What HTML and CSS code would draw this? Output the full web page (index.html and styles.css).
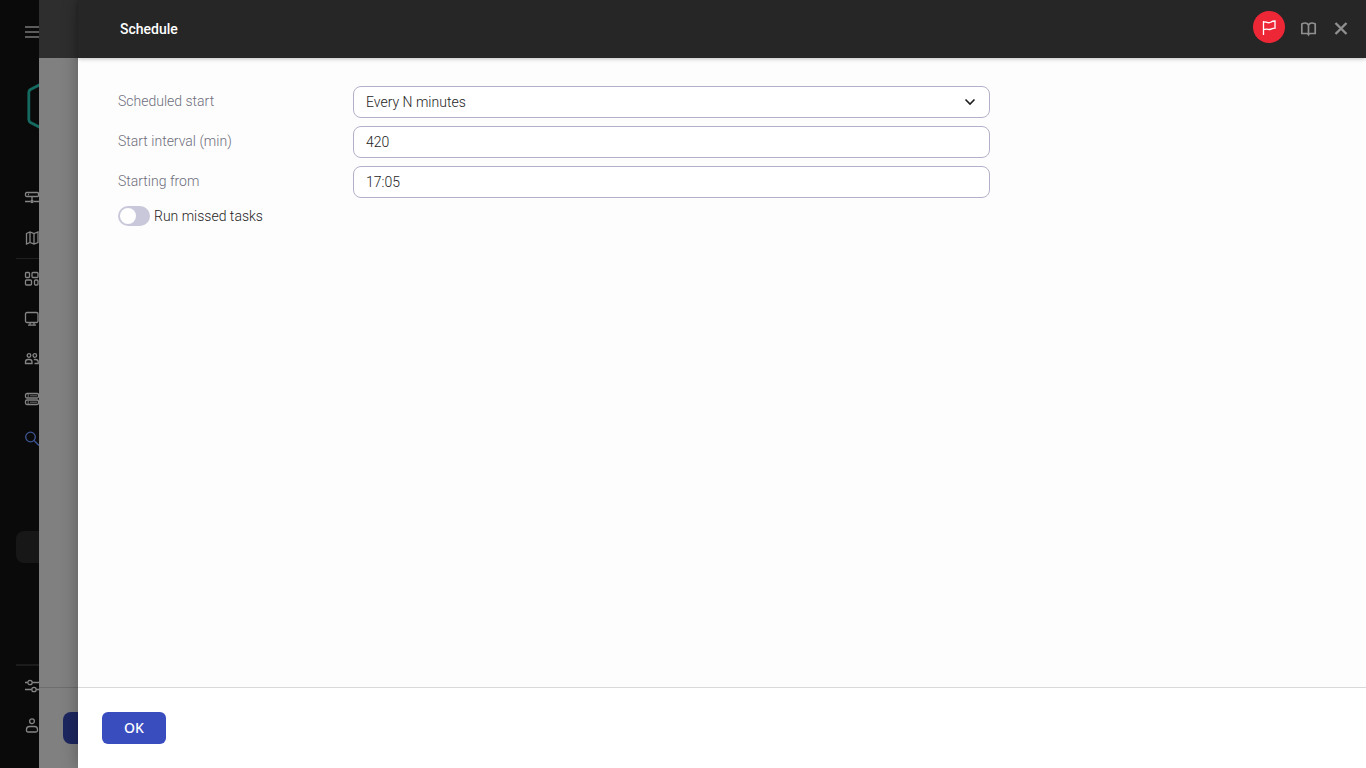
FILE: index.html
```html
<!DOCTYPE html>
<html lang="en">
<head>
<meta charset="utf-8">
<title>Schedule</title>
<meta name="viewport" content="width=device-width, initial-scale=1">
<link rel="stylesheet" href="styles.css">
</head>
<body>
<div class="app">
  <nav class="rail" aria-label="Main menu">
    <button class="rail-menu" type="button" aria-label="Toggle menu">
      <svg class="icon" viewBox="0 0 16 16"><path d="M1 3h15M1 8h15M1 13h15" stroke-width="2"/></svg>
    </button>
    <svg class="logo" viewBox="0 0 40 46" aria-hidden="true"><path d="M20 -1.500L4.500 6.500Q2.800 7.600 2.800 9.500v27Q2.800 38.400 4.500 39.500L20 47.500l15.500-8Q37.200 38.400 37.200 36.500v-27Q37.200 7.600 35.500 6.500Z"/></svg>
    <div class="rail-group">
      <a class="rail-item" href="#" aria-label="Network"><svg class="icon" viewBox="0 0 16 16"><rect x="1.500" y="2.500" width="13" height="4" rx="1.200"/><path d="M4 4.500h1M8 6.500v5M1 11.500h5.500M9.500 11.500H15"/><circle cx="8" cy="11.500" r="1"/></svg></a>
      <a class="rail-item" href="#" aria-label="Map"><svg class="icon" viewBox="0 0 16 16"><path d="M2.500 3.500L6 2l4 1.500L14 2v10.500L10 14l-4-1.500L2.500 14ZM6 2v10.500M10 3.500V14"/></svg></a>
    </div>
    <div class="rail-group rail-ruled">
      <a class="rail-item" href="#" aria-label="Dashboard"><svg class="icon" viewBox="0 0 16 16"><rect x="1.500" y="1.500" width="4" height="5" rx="1"/><rect x="8" y="1.500" width="6" height="5" rx="1"/><rect x="1.500" y="9" width="6" height="5" rx="1"/><rect x="10.500" y="9" width="3.500" height="5" rx="1"/></svg></a>
      <a class="rail-item" href="#" aria-label="Devices"><svg class="icon" viewBox="0 0 16 16"><rect x="1.500" y="1.500" width="12.500" height="10" rx="1.500"/><path d="M6 11.500v2.500M10 11.500v2.500M4 14.200h8"/></svg></a>
      <a class="rail-item" href="#" aria-label="Users"><svg class="icon" viewBox="0 0 16 16"><circle cx="5" cy="4.500" r="1.800"/><circle cx="10.800" cy="4.500" r="1.800"/><path d="M1.500 12.500v-1.500Q1.500 8.500 4 8.500h1.500Q8 8.500 8 11v1.500ZM9.800 8.500h1.700Q14.200 8.500 14.200 11v1.500h-3.700"/></svg></a>
      <a class="rail-item" href="#" aria-label="Servers"><svg class="icon" viewBox="0 0 16 16"><rect x="1.500" y="2.500" width="13" height="4.500" rx="1.500"/><rect x="1.500" y="9" width="13" height="4.500" rx="1.500"/><path d="M4.200 3v3.500M4.200 9.500v3.500M6 4.800h7M6 11.200h7" stroke-width=".8"/></svg></a>
      <a class="rail-item rail-current" href="#" aria-label="Search"><svg class="icon" viewBox="0 0 16 16"><circle cx="6.500" cy="6" r="4.800"/><path d="M10 9.500l5 5"/></svg></a>
    </div>
    <a class="rail-chip" href="#" aria-label="Current section"></a>
    <div class="rail-group rail-bottom">
      <a class="rail-item" href="#" aria-label="Settings"><svg class="icon" viewBox="0 0 16 16"><path d="M1 4.500h2.500M8.500 4.500H16M1 11.500h6.500M12.500 11.500H16"/><circle cx="6" cy="4.500" r="2.200"/><circle cx="10" cy="11.500" r="2.200"/></svg></a>
      <a class="rail-item" href="#" aria-label="Account"><svg class="icon" viewBox="0 0 16 16"><circle cx="8" cy="3.200" r="2.400"/><path d="M2.500 12.500v-1Q2.500 8.500 5.500 8.500h5Q13.500 8.500 13.500 11.500v1Q13.500 14 12 14H4Q2.500 14 2.500 12.500Z"/></svg></a>
    </div>
  </nav>
  <div class="backdrop" aria-hidden="true">
    <div class="backdrop-head"></div>
    <div class="backdrop-body"></div>
    <div class="backdrop-foot"><div class="backdrop-button"></div></div>
  </div>
  <main class="panel">
    <header class="panel-head">
      <h1 class="title">Schedule</h1>
      <button class="flag" type="button" aria-label="Flag"><svg class="icon" viewBox="0 0 16 16"><path d="M2.500 2v14M2.500 3.500C5 1.500 6.500 4.800 9 3.500S12.500 2 14 2v7.200C11.500 9 10.500 10.300 9 10.500S5 9 2.500 10.800"/></svg></button>
      <button class="tool" type="button" aria-label="Help"><svg class="icon" viewBox="0 0 16 16"><path d="M7.500 4Q6.300 2 4.200 2Q2.500 2 .8 3v9.500H5.500Q7 12.500 7.500 13.500Q8 12.500 9.500 12.500H14.200V3Q12.500 2 10.800 2Q8.700 2 7.500 4V13" stroke-width="1.700"/></svg></button>
      <button class="tool" type="button" aria-label="Close"><svg class="icon" viewBox="0 0 16 16"><path d="M2.500 2l11 11M13.500 2l-11 11" stroke-width="2.400"/></svg></button>
    </header>
    <form class="form">
      <div class="fields">
        <label class="label" for="mode">Scheduled start</label>
        <div class="select-wrap">
          <select class="field" id="mode"><option>Every N minutes</option></select>
          <svg class="icon chevron" viewBox="0 0 16 16" aria-hidden="true"><path d="M3.500 5.500L8 10l4.500-4.500"/></svg>
        </div>
        <label class="label" for="interval">Start interval (min)</label>
        <input class="field" id="interval" type="text" value="420">
        <label class="label" for="from">Starting from</label>
        <input class="field" id="from" type="text" value="17:05">
      </div>
      <div class="toggle-row">
        <input class="toggle" id="missed" type="checkbox" role="switch">
        <label for="missed">Run missed tasks</label>
      </div>
    </form>
    <footer class="panel-foot"><button class="ok" type="button">OK</button></footer>
  </main>
</div>
</body>
</html>
```
FILE: styles.css
```css
* { box-sizing: border-box; }

body {
  margin: 0;
  font: 300 14px/20px Roboto, "Liberation Sans", sans-serif;
  color: #1d1d1d;
}

button { border: 0; padding: 0; background: none; cursor: pointer; }

.app { display: flex; min-height: 100vh; overflow: hidden; }

.icon {
  display: block;
  width: 16px;
  height: 16px;
  flex: none;
  fill: none;
  stroke: currentColor;
  stroke-width: 1.3;
}

/* Collapsed navigation */
.rail {
  display: flex;
  flex-direction: column;
  width: 39px;
  flex: none;
  overflow: hidden;
  padding: 24px 0 22px 16px;
  background: #0a0a0a;
  color: #858585;
}

.rail-menu { color: #5c5c5c; padding-left: 8px; align-self: flex-start; }

.logo {
  width: 40px;
  height: 46px;
  flex: none;
  margin: 43px 0 49px 10px;
  fill: none;
  stroke: #146a5f;
  stroke-width: 2.8;
}

.rail-group { display: flex; flex-direction: column; }
.rail-ruled { border-top: 1px solid #202020; }
.rail-item { display: flex; align-items: center; height: 40px; padding-left: 8px; color: inherit; }
.rail-current { color: #3e5694; }

.rail-chip {
  width: 48px;
  height: 32px;
  flex: none;
  margin-top: 72px;
  border-radius: 8px;
  background: #171717;
}

.rail-bottom { margin-top: auto; border-top: 2px solid #1c1c1c; }

/* Dimmed parent panel */
.backdrop { display: flex; flex-direction: column; width: 39px; flex: none; background: #808080; }
.backdrop-head { height: 58px; background: #2e2e2e; }
.backdrop-body { flex: 1; }
.backdrop-foot { height: 81px; padding: 24px 0 0 24px; border-top: 1px solid #6d6d6d; }
.backdrop-button { height: 32px; border-radius: 8px 0 0 8px; background: #1d2760; }

/* Active panel */
.panel {
  display: flex;
  flex-direction: column;
  flex: 1;
  min-width: 0;
  background: #fdfdfd;
  box-shadow: 0 0 16px rgba(0, 0, 0, .3);
}

.panel-head {
  display: flex;
  align-items: center;
  gap: 16px;
  height: 58px;
  padding: 0 17px 0 42px;
  background: #262626;
  color: #8f8f8f;
  box-shadow: 0 1px 4px rgba(0, 0, 0, .25);
}

.title { margin: 0 auto 0 0; font-size: 14px; line-height: 20px; font-weight: 500; color: #fff; }

.flag {
  display: grid;
  place-items: center;
  width: 32px;
  height: 32px;
  margin-bottom: 4px;
  border-radius: 50%;
  background: #ee2737;
  color: #fff;
}

.tool { color: inherit; }

.form { flex: 1; padding: 28px 40px; }

.fields {
  display: grid;
  grid-template-columns: 235px minmax(0, 637px);
  row-gap: 8px;
}

.label { padding-top: 5px; color: #6e6e7c; }

.field {
  display: block;
  width: 100%;
  height: 32px;
  padding: 0 12px;
  border: 1px solid #b3b1c9;
  border-radius: 8px;
  background: #fff;
  color: inherit;
  font: inherit;
  appearance: none;
}

.select-wrap { position: relative; }
.chevron { position: absolute; top: 8px; right: 12px; pointer-events: none; stroke-width: 1.6; }

.toggle-row { display: flex; align-items: center; gap: 4px; margin-top: 8px; }

.toggle {
  width: 32px;
  height: 20px;
  margin: 0;
  padding: 2px;
  border-radius: 10px;
  background: #c8c8da;
  appearance: none;
}

.toggle::before { content: ""; display: block; width: 16px; height: 16px; border-radius: 50%; background: #fff; }
.toggle:checked { background: #3a4dbf; }
.toggle:checked::before { margin-left: auto; }

.panel-foot { padding: 24px; border-top: 1px solid #d9d9d9; background: #fff; }

.ok {
  display: block;
  height: 32px;
  padding: 0 22px;
  border-radius: 6px;
  background: #3a4dbf;
  color: #fff;
  font: 500 14px/20px "Noto Sans", sans-serif;
}
```
